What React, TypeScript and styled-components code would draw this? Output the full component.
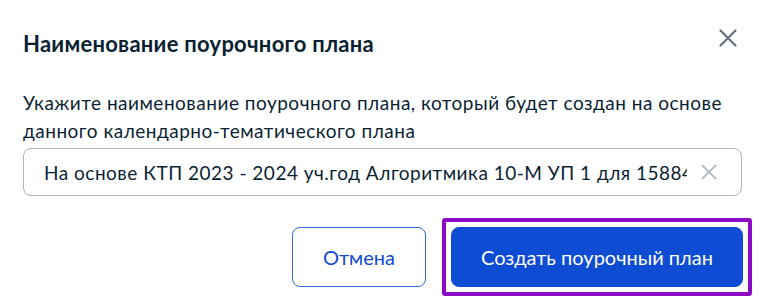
import React from 'react';
import styled, { createGlobalStyle } from 'styled-components';

const GlobalStyle = createGlobalStyle`
  html, body {
    margin: 0;
    padding: 0;
    background: #ffffff;
  }
  body {
    font-family: Lato, 'Noto Sans', sans-serif;
    color: #0b1f33;
  }
`;

const Dialog = styled.div`
  width: 764px;
  min-height: 306px;
  box-sizing: border-box;
  padding: 30px 22px 19px 23px;
`;

const Header = styled.div`
  display: flex;
  justify-content: space-between;
  align-items: flex-start;
`;

const Title = styled.h2`
  margin: 0;
  font-size: 22px;
  line-height: 28px;
  font-weight: 700;
  letter-spacing: 0.25px;
  color: #0b1f33;
`;

const CloseButton = styled.button`
  display: flex;
  align-items: center;
  justify-content: center;
  width: 18px;
  height: 18px;
  margin: -1px 5px 0 0;
  padding: 0;
  border: none;
  background: transparent;
  cursor: pointer;
`;

const Description = styled.p`
  margin: 31px 0 0;
  font-size: 19px;
  line-height: 28px;
  letter-spacing: 0.5px;
  color: #0b1f33;
`;

const Field = styled.div`
  display: flex;
  align-items: center;
  gap: 14px;
  height: 48px;
  margin-top: 3px;
  padding: 0 24px 0 20px;
  box-sizing: border-box;
  border: 1px solid #aab4c3;
  border-radius: 8px;
`;

const FieldInput = styled.input`
  flex: 1;
  min-width: 0;
  border: none;
  outline: none;
  padding: 0;
  background: transparent;
  font-family: Lato, 'Noto Sans', sans-serif;
  font-size: 19px;
  letter-spacing: 0.5px;
  color: #0b1f33;
`;

const ClearButton = styled.button`
  display: flex;
  align-items: center;
  justify-content: center;
  width: 16px;
  height: 16px;
  padding: 0;
  border: none;
  background: transparent;
`;

const Actions = styled.div`
  display: flex;
  justify-content: flex-end;
  align-items: center;
  gap: 16px;
  margin-top: 31px;
`;

const Button = styled.button<{ $primary?: boolean }>`
  height: 60px;
  padding: 0 20px;
  box-sizing: border-box;
  border-radius: 8px;
  border: 1px solid ${(p) => (p.$primary ? '#0d4cd3' : '#2a6ddb')};
  background: ${(p) => (p.$primary ? '#0d4cd3' : '#ffffff')};
  color: ${(p) => (p.$primary ? '#ffffff' : '#0d4cd3')};
  font-family: Lato, 'Noto Sans', sans-serif;
  font-size: 20px;
  cursor: pointer;
`;

const Highlight = styled.div`
  display: flex;
  padding: 5px;
  margin: -9px -10px -9px 0;
  border: 4px solid #8b0ac4;
  border-radius: 3px;
`;

const Cross = ({ size, color, width }: { size: number; color: string; width: number }) => (
  <svg width={size} height={size} viewBox="0 0 18 18" fill="none">
    <path d="M1.5 1.5L16.5 16.5M16.5 1.5L1.5 16.5" stroke={color} strokeWidth={width} strokeLinecap="round" />
  </svg>
);

export default function App() {
  return (
    <>
      <GlobalStyle />
      <Dialog>
        <Header>
          <Title>Наименование поурочного плана</Title>
          <CloseButton aria-label="Закрыть">
            <Cross size={18} color="#66727f" width={2.2} />
          </CloseButton>
        </Header>
        <Description>
          Укажите наименование поурочного плана, который будет создан на основе данного
          календарно-тематического плана
        </Description>
        <Field>
          <FieldInput defaultValue="На основе КТП 2023 - 2024 уч.год Алгоритмика 10-М УП 1 для 158847 (копия)" />
          <ClearButton aria-label="Очистить">
            <Cross size={16} color="#aeb6c2" width={2} />
          </ClearButton>
        </Field>
        <Actions>
          <Button style={{ width: 134 }}>Отмена</Button>
          <Highlight>
            <Button $primary style={{ width: 292 }}>Создать поурочный план</Button>
          </Highlight>
        </Actions>
      </Dialog>
    </>
  );
}
